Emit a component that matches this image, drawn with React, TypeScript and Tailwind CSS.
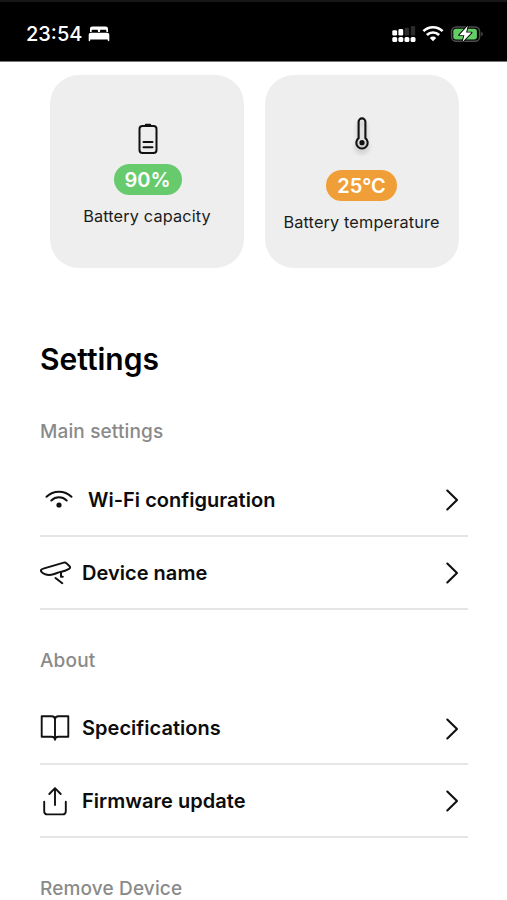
import type { ReactNode } from 'react';

function BedIcon() {
  return (
    <svg width="22" height="16" viewBox="0 0 22 16" fill="#fff">
      <path d="M2 6V2.8C2 1.2 3 .5 4.4.5h13.2c1.4 0 2.4.7 2.4 2.3V6h-1.6V4.9c0-.8-.5-1.2-1.2-1.2h-4c-.8 0-1.2.4-1.2 1.2V6h-2V4.9c0-.8-.4-1.2-1.2-1.2h-4c-.8 0-1.2.4-1.2 1.2V6z" />
      <path d="M.7 9c0-1.4.9-2.2 2.2-2.2h16.2c1.4 0 2.2.8 2.2 2.2v5.6c0 .4-.3.7-.7.7s-.8-.3-.8-.7v-1.2H2.2v1.2c0 .4-.3.7-.8.7s-.7-.3-.7-.7z" />
    </svg>
  );
}

function SignalIcon() {
  return (
    <svg width="24" height="18" viewBox="0 0 24 18" fill="#fff">
      <rect x="0.3" y="5.2" width="4.8" height="5.4" rx="1.4" />
      <rect x="6.4" y="4" width="4.8" height="6.6" rx="1.4" />
      <rect x="12.6" y="2.8" width="4.4" height="7.8" rx="1.2" fill="#2b2b2b" />
      <rect x="18.8" y="1" width="4.4" height="9.6" rx="1.2" fill="#2b2b2b" />
      <rect x="0.3" y="12" width="4.9" height="5" rx="1.6" />
      <rect x="6.4" y="12" width="4.9" height="5" rx="1.6" />
      <rect x="12.5" y="12" width="4.9" height="5" rx="1.6" />
      <rect x="18.6" y="12" width="4.9" height="5" rx="1.6" />
    </svg>
  );
}

function StatusWifiIcon() {
  return (
    <svg width="22" height="17" viewBox="0 0 22 17" fill="none" stroke="#fff" strokeWidth="2.6">
      <path d="M1.4 6.2a13.6 13.6 0 0 1 19.2 0" />
      <path d="M4.9 10a8.6 8.6 0 0 1 12.2 0" />
      <path d="M11 16.2l-3.2-3.3a4.6 4.6 0 0 1 6.4 0z" fill="#fff" stroke="none" />
    </svg>
  );
}

function ChargingIcon() {
  return (
    <svg width="34" height="18" viewBox="0 0 34 18" fill="none">
      <rect x="1.6" y="1.9" width="28" height="14.4" rx="4.6" stroke="#4c4c4c" strokeWidth="1.5" />
      <path d="M31.2 7v4.2c1-.3 1.6-1.1 1.6-2.1s-.6-1.8-1.6-2.1z" fill="#4c4c4c" />
      <rect x="3.3" y="3.8" width="23.6" height="10.6" rx="2.6" fill="#62ce66" />
      <path d="M17.8.8L9.2 10.2h5.2L12.5 17l9-9.4h-5.4z" fill="#fff" stroke="#000" strokeWidth="1.8" strokeLinejoin="round" paintOrder="stroke" />
    </svg>
  );
}

function BatteryIcon() {
  return (
    <svg width="20" height="32" viewBox="0 0 20 32" fill="none" stroke="#111" strokeWidth="2" strokeLinecap="round">
      <rect x="1.5" y="3" width="17" height="27" rx="3" />
      <path d="M7.9 1.8h4.2" strokeWidth="2.2" />
      <path d="M5.5 19h9M5.5 24.3h9" />
    </svg>
  );
}

function ThermometerIcon() {
  return (
    <svg width="16" height="34" viewBox="0 0 16 34" fill="none" stroke="#111" strokeWidth="2.1" className="drop-shadow-[0_4px_2px_rgba(0,0,0,0.22)]">
      <path d="M4.6 21.2V4.8a3.4 3.4 0 0 1 6.8 0v16.400a5.700 5.700 0 1 1-6.800 0z" />
      <circle cx="8" cy="25.7" r="2.6" fill="#111" stroke="none" />
    </svg>
  );
}

function WifiIcon() {
  return (
    <svg width="28" height="20" viewBox="0 0 28 20" fill="none" stroke="#111" strokeWidth="2" strokeLinecap="round">
      <path d="M1.5 6.8C8.5 0 19.5 0 26.5 6.8" />
      <path d="M6.3 10.5C10.7 6.3 17.3 6.3 21.7 10.5" />
      <circle cx="14" cy="15" r="2.6" fill="#111" stroke="none" />
    </svg>
  );
}

function CameraIcon() {
  return (
    <svg width="32" height="24" viewBox="0 0 32 24" fill="none" stroke="#111" strokeWidth="2" strokeLinecap="round" strokeLinejoin="round">
      <path d="M3.3 7.6L23.8 1.6c1.2-.3 2 0 2.8.8l3 2.9c.8.9.6 1.9-.5 2.5-2.7 1.5-5.6 2.5-8.600 3.100-3.500.8-5.900 2.600-9.300 2.900-3.800.4-7.700-.8-9.700-3-1.200-1.400-.2-2.700 1.800-3.200z" />
      <path d="M21 11.200v4.600h1.800" />
      <path d="M15.500 17l6.800 5.200" />
    </svg>
  );
}

function BookIcon() {
  return (
    <svg width="30" height="28" viewBox="0 0 30 28" fill="none" stroke="#111" strokeWidth="1.9" strokeLinejoin="round">
      <path d="M15 5.5C15 3.4 13.6 2.2 11.5 2.2H1.7v20.6h9.8c2.1 0 3.5 1 3.5 3 0-2 1.4-3 3.5-3h9.8V2.2h-9.8C16.4 2.2 15 3.4 15 5.5z" />
      <path d="M15 5.5v20" />
    </svg>
  );
}

function UploadIcon() {
  return (
    <svg width="24" height="30" viewBox="0 0 24 30" fill="none" stroke="#111" strokeWidth="1.9" strokeLinecap="round" strokeLinejoin="round">
      <path d="M12 19V2.2M6.3 8L12 2.2 17.7 8" />
      <path d="M1.2 15.8v9.4c0 2 1.2 3.2 3.2 3.2h15.2c2 0 3.2-1.2 3.2-3.2v-9.4" />
    </svg>
  );
}

function Chevron() {
  return (
    <svg width="14" height="22" viewBox="0 0 14 22" fill="none" stroke="#111" strokeWidth="2.1" strokeLinecap="round" strokeLinejoin="round">
      <path d="M2.3 1.5L12 11 2.3 20.5" />
    </svg>
  );
}

function StatCard({ icon, value, label, color }: { icon: ReactNode; value: string; label: string; color: string }) {
  return (
    <div className="flex h-[193px] w-[194px] shrink-0 flex-col items-center rounded-[29px] bg-[#eeeeee]">
      {icon}
      <span className={`flex h-[31px] items-center justify-center rounded-full text-[20px] font-semibold text-white ${color}`}>
        {value}
      </span>
      <span className="mt-[9px] text-[16.3px] leading-6 tracking-[0.14px] whitespace-nowrap text-[#1c1c1c]">{label}</span>
    </div>
  );
}

function SettingsRow({ icon, label, className = '' }: { icon: ReactNode; label: ReactNode; className?: string }) {
  return (
    <button className={`flex w-full items-center border-b-2 border-[#e5e5e5] pr-[9px] ${className}`}>
      {icon}
      <span className="text-[20px] font-semibold tracking-[0.03px] whitespace-nowrap text-[#0c0c0c]">{label}</span>
      <span className="ml-auto pt-px"><Chevron /></span>
    </button>
  );
}

function SectionTitle({ children }: { children: ReactNode }) {
  return <h2 className="text-[19px] leading-6 font-medium tracking-[0.15px] text-[#8a8a8a]">{children}</h2>;
}

export default function App() {
  return (
    <div className="h-[900px] w-[507px] overflow-hidden bg-white font-['Inter',sans-serif]">
      {/* Status bar */}
      <header className="flex h-[62px] items-center border-t-2 border-b border-t-[#171717] border-b-[#777] bg-black pt-1 pr-[23px] pl-[26px]">
        <span className="text-[20px] leading-6 font-medium text-white">23:54</span>
        <span className="ml-[6px]"><BedIcon /></span>
        <div className="ml-auto flex items-center">
          <SignalIcon />
          <span className="ml-[6px]"><StatusWifiIcon /></span>
          <span className="ml-[6px]"><ChargingIcon /></span>
        </div>
      </header>

      {/* Battery cards */}
      <section className="flex gap-[20.5px] pt-[13px] pl-[50px]">
        <StatCard
          icon={<div className="mt-[48px] mb-[9px] ml-px"><BatteryIcon /></div>}
          value="90%"
          label="Battery capacity"
          color="w-[68px] bg-[#67cb6d] ml-px"
        />
        <StatCard
          icon={<div className="mt-[42px] mb-[19px] ml-px"><ThermometerIcon /></div>}
          value="25°C"
          label="Battery temperature"
          color="w-[71px] bg-[#f09f38]"
        />
      </section>

      <main className="pr-[39px] pl-[40px]">
        <h1 className="mt-[71px] text-[30px] leading-10 font-semibold text-black">Settings</h1>

        <div className="mt-[41px]"><SectionTitle>Main settings</SectionTitle></div>
        <div className="mt-[20px]">
          <SettingsRow
            className="h-[73px]"
            icon={<span className="mr-[15px] ml-[5px]"><WifiIcon /></span>}
            label="Wi-Fi configuration"
          />
          <SettingsRow className="h-[73px]" icon={<span className="mr-[10px]"><CameraIcon /></span>} label="Device name" />
        </div>

        <div className="mt-[39px]"><SectionTitle>About</SectionTitle></div>
        <div className="mt-[20px]">
          <SettingsRow className="h-[72px]" icon={<span className="mr-[12px]"><BookIcon /></span>} label="Specifications" />
          <SettingsRow
            className="h-[73px]"
            icon={<span className="mr-[15px] ml-[3px]"><UploadIcon /></span>}
            label="Firmware update"
          />
        </div>

        <div className="mt-[39px]"><SectionTitle>Remove Device</SectionTitle></div>
      </main>
    </div>
  );
}
